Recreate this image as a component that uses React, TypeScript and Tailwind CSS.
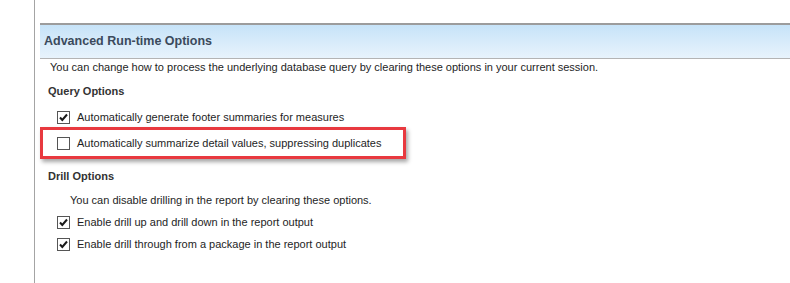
import { FunctionComponent } from "react";

const Box: FunctionComponent<{ checked?: boolean }> = ({ checked = false }) => (
  <div className="w-[13px] h-[13px] border border-[#555] bg-white flex items-center justify-center shrink-0">
    {checked && (
      <svg width="11" height="11" viewBox="0 0 11 11">
        <path d="M2 5.5 L4.3 8 L9 2.5" fill="none" stroke="#1a1a1a" strokeWidth="2" />
      </svg>
    )}
  </div>
);

const Option: FunctionComponent<{ label: string; checked?: boolean }> = ({
  label,
  checked = false,
}) => (
  <div className="flex items-center gap-[7px]">
    <Box checked={checked} />
    <span className="whitespace-nowrap">{label}</span>
  </div>
);

const App: FunctionComponent = () => {
  return (
    <div className="w-[790px] h-[283px] bg-white flex text-[11px] text-[#1e1e1e] font-['Liberation_Sans',Arial,sans-serif] overflow-hidden">
      <div className="w-[34px] shrink-0" />
      <div className="flex-1 border-l border-[#a4a4a4] pl-[5px] pt-[23px] flex flex-col">
        <div className="h-[36px] border-t-2 border-[#9c9c9c] border-b border-b-[#b4b4b4] bg-gradient-to-b from-[#c6e3f8] to-[#e8f3fc] flex items-center pl-[4px]">
          <span className="font-bold text-[12.5px] text-[#3b4a5c]">Advanced Run-time Options</span>
        </div>
        <div className="h-[17px] flex items-center pl-[10px] whitespace-nowrap">
          You can change how to process the underlying database query by clearing these options in your current session.
        </div>
        <div className="h-[20px] mt-[5px] flex items-center pl-[8px] font-bold text-[#333]">Query Options</div>
        <div className="h-[18px] mt-[7px] flex items-center pl-[17px]">
          <Option checked label="Automatically generate footer summaries for measures" />
        </div>
        <div className="w-[366px] h-[32px] mt-[1px] border-[3px] border-[#e8393f] shadow-[2px_3px_4px_rgba(0,0,0,0.35)] flex items-center pl-[14px]">
          <Option label="Automatically summarize detail values, suppressing duplicates" />
        </div>
        <div className="h-[18px] mt-[8px] flex items-center pl-[8px] font-bold text-[#333]">Drill Options</div>
        <div className="h-[18px] mt-[6px] flex items-center pl-[30px] whitespace-nowrap">
          You can disable drilling in the report by clearing these options.
        </div>
        <div className="h-[18px] mt-[4px] flex items-center pl-[17px]">
          <Option checked label="Enable drill up and drill down in the report output" />
        </div>
        <div className="h-[18px] mt-[4px] flex items-center pl-[17px]">
          <Option checked label="Enable drill through from a package in the report output" />
        </div>
      </div>
    </div>
  );
};

export default App;
